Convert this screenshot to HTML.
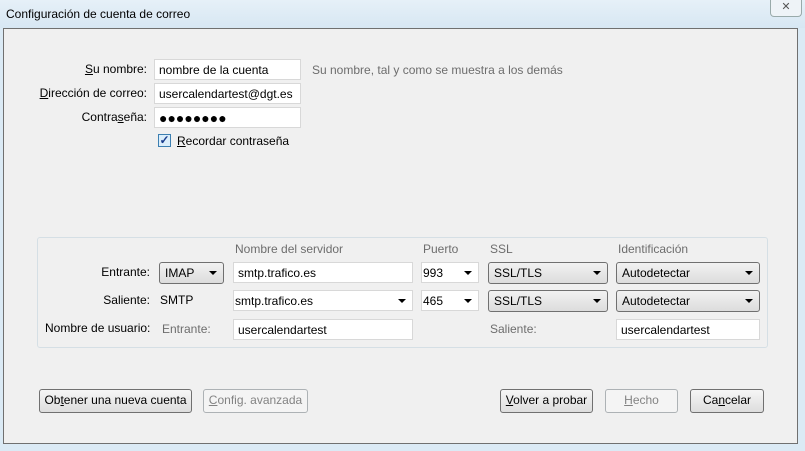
<!DOCTYPE html>
<html><head><meta charset="utf-8"><style>
*{box-sizing:border-box;margin:0;padding:0}
body{width:805px;height:451px;overflow:hidden;background:#dbeaf5;font-family:"Liberation Sans",sans-serif;font-size:12px;color:#000;position:relative}
.a{position:absolute}
.title{left:0;top:0;width:805px;height:28px;background:linear-gradient(#e6f0f8,#d7e7f3)}
.panel{left:3px;top:28px;width:795px;height:416px;background:#f0f0f0;border:1px solid #707070}
.inp{position:absolute;background:#fff;border:1px solid #d8d8d8;height:21px;padding:3px 4px;line-height:14px;white-space:nowrap}
.sel{position:absolute;height:22px;border:1px solid #707070;border-radius:3px;background:linear-gradient(#f2f2f2,#dcdcdc);padding:3px 5px;line-height:14px}
.arr{position:absolute;right:6px;top:8px;width:0;height:0;border-left:4px solid transparent;border-right:4px solid transparent;border-top:4px solid #000}
.lbl{position:absolute;white-space:nowrap;line-height:14px}
.r{text-align:right}
.g{color:#6d6d6d}
.btn{position:absolute;height:24px;border:1px solid #707070;border-radius:3px;background:linear-gradient(#f6f6f6,#dddddd);text-align:center;line-height:21px;white-space:nowrap}
.dis{border-color:#adb2b5;background:#f4f4f4;color:#838383}
u{text-decoration:underline}
</style></head><body>
<div class="a title"></div>
<div class="lbl" style="left:6px;top:7px">Configuración de cuenta de correo</div>
<div class="a" style="left:770px;top:0;width:32px;height:17px;border:1px solid #9aa;border-top:none;border-radius:0 0 4px 4px;background:#eef3f7;text-align:center;color:#555;font-size:11px;line-height:15px">✕</div>
<div class="a panel"></div>

<div class="lbl r" style="left:0;width:147px;top:62px"><u>S</u>u nombre:</div>
<div class="inp" style="left:154px;top:59px;width:147px">nombre de la cuenta</div>
<div class="lbl g" style="left:312px;top:63px">Su nombre, tal y como se muestra a los demás</div>
<div class="lbl r" style="left:0;width:147px;top:86px"><u>D</u>irección de correo:</div>
<div class="inp" style="left:154px;top:83px;width:147px">usercalendartest@dgt.es</div>
<div class="lbl r" style="left:0;width:147px;top:110px">Contra<u>s</u>eña:</div>
<div class="inp" style="left:154px;top:107px;width:147px;font-size:14px;letter-spacing:0px">●●●●●●●●</div>
<div class="a" style="left:158px;top:134px;width:13px;height:13px;border:1px solid #3c7fb1;background:#dbeefb;color:#1a3c8c;font-size:12px;line-height:11px;text-align:center;font-weight:bold">✓</div>
<div class="lbl" style="left:177px;top:134px"><u>R</u>ecordar contraseña</div>

<div class="a" style="left:37px;top:237px;width:731px;height:111px;border:1px solid #d5dfe5;border-radius:3px"></div>
<div class="lbl g" style="left:235px;top:242px">Nombre del servidor</div>
<div class="lbl g" style="left:423px;top:242px">Puerto</div>
<div class="lbl g" style="left:490px;top:242px">SSL</div>
<div class="lbl g" style="left:618px;top:242px">Identificación</div>

<div class="lbl r" style="left:0;width:150px;top:265px">Entrante:</div>
<div class="sel" style="left:159px;top:262px;width:65px">IMAP<div class="arr"></div></div>
<div class="inp" style="left:233px;top:262px;width:180px">smtp.trafico.es</div>
<div class="inp" style="left:421px;top:262px;width:58px;padding-left:1px">993<div class="arr"></div></div>
<div class="sel" style="left:488px;top:262px;width:120px">SSL/TLS<div class="arr"></div></div>
<div class="sel" style="left:616px;top:262px;width:144px">Autodetectar<div class="arr"></div></div>

<div class="lbl r" style="left:0;width:150px;top:293px">Saliente:</div>
<div class="lbl" style="left:160px;top:293px">SMTP</div>
<div class="inp" style="left:233px;top:290px;width:180px;padding-left:1px">smtp.trafico.es<div class="arr"></div></div>
<div class="inp" style="left:421px;top:290px;width:58px;padding-left:1px">465<div class="arr"></div></div>
<div class="sel" style="left:488px;top:290px;width:120px">SSL/TLS<div class="arr"></div></div>
<div class="sel" style="left:616px;top:290px;width:144px">Autodetectar<div class="arr"></div></div>

<div class="lbl" style="left:45px;top:321px">Nombre de usuario:</div>
<div class="lbl g" style="left:162px;top:322px">Entrante:</div>
<div class="inp" style="left:233px;top:319px;width:180px">usercalendartest</div>
<div class="lbl g" style="left:490px;top:322px">Saliente:</div>
<div class="inp" style="left:616px;top:319px;width:144px">usercalendartest</div>

<div class="btn" style="left:39px;top:389px;width:153px">Ob<u>t</u>ener una nueva cuenta</div>
<div class="btn dis" style="left:203px;top:389px;width:105px"><u>C</u>onfig. avanzada</div>
<div class="btn" style="left:500px;top:389px;width:93px"><u>V</u>olver a probar</div>
<div class="btn dis" style="left:605px;top:389px;width:73px"><u>H</u>echo</div>
<div class="btn" style="left:690px;top:389px;width:74px">Ca<u>n</u>celar</div>
</body></html>
